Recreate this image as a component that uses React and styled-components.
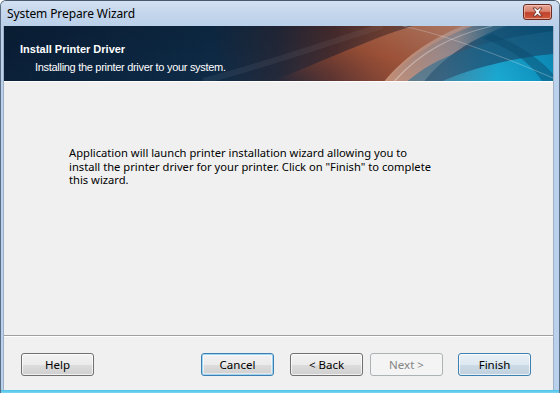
import React from "react";
import styled, { createGlobalStyle } from "styled-components";

const Global = createGlobalStyle`
  html, body { margin: 0; padding: 0; background: #ffffff; }
  body { font-family: "Noto Sans", "Open Sans", sans-serif; }
`;

const Window = styled.div`
  width: 560px;
  height: 393px;
  box-sizing: border-box;
  display: flex;
  flex-direction: column;
  background: #b9d1ea;
  border-top: 1px solid #4a5a6e;
  border-left: 1px solid #5b6d84;
  border-right: 1px solid #5b6d84;
  border-radius: 6px 6px 0 0;
  overflow: hidden;
  position: relative;
`;

const TitleBar = styled.div`
  height: 25px;
  flex: none;
  display: flex;
  align-items: center;
  justify-content: space-between;
  padding: 0 7px 0 6px;
  background: linear-gradient(#d3e1f1 0%, #c4d6ec 50%, #bad0e9 100%);
`;

const TitleText = styled.span`
  font-family: "Noto Sans", "Open Sans", sans-serif;
  font-size: 12px;
  color: #000;
  letter-spacing: -0.1px;
`;

const CloseButton = styled.div`
  width: 29px;
  height: 16px;
  box-sizing: border-box;
  border: 1px solid #6b2a22;
  border-radius: 3px;
  background: linear-gradient(#e5a596 0%, #d8826e 45%, #c0412b 55%, #cf5a3e 100%);
  display: flex;
  align-items: center;
  justify-content: center;
  margin-top: -3px;
  box-shadow: inset 0 0 0 1px rgba(255, 220, 210, 0.5);
`;

const Frame = styled.div`
  flex: 1;
  display: flex;
  flex-direction: column;
  margin: 0 5px 0 2px;
  border-left: 1px solid #9db0c6;
  border-right: 1px solid #9db0c6;
  background: #f0f0f0;
`;

const Banner = styled.div`
  height: 55px;
  flex: none;
  position: relative;
  border-bottom: 1px solid #ffffff;
  overflow: hidden;
  background: #0c2440;
`;

const BannerArt = styled.svg`
  position: absolute;
  inset: 0;
  width: 100%;
  height: 100%;
`;

const BannerText = styled.div`
  position: relative;
  padding: 17px 0 0 16px;
  color: #ffffff;
  display: flex;
  flex-direction: column;
`;

const BannerTitle = styled.span`
  font-family: "Liberation Sans", Arial, sans-serif;
  font-weight: bold;
  font-size: 11px;
  line-height: 13px;
`;

const BannerSub = styled.span`
  font-family: "Liberation Sans", Arial, sans-serif;
  font-size: 11px;
  line-height: 13px;
  margin-top: 5px;
  padding-left: 15px;
  letter-spacing: -0.3px;
`;

const Body = styled.div`
  flex: 1;
  padding: 64px 0 0 65px;
`;

const Message = styled.p`
  margin: 0;
  white-space: nowrap;
  font-family: "Noto Sans", "Open Sans", sans-serif;
  font-size: 11.2px;
  line-height: 13.5px;
  color: #000;
`;

const Separator = styled.div`
  height: 0;
  border-top: 1px solid #a0a0a0;
  border-bottom: 1px solid #ffffff;
  flex: none;
`;

const ButtonRow = styled.div`
  height: 52px;
  flex: none;
  display: flex;
  align-items: center;
  padding: 1px 22px 0 17px;
`;

const Spacer = styled.div`
  flex: 1;
`;

const Button = styled.div`
  width: 73px;
  height: 23px;
  box-sizing: border-box;
  margin-left: ${(p) => p.$gap || 0}px;
  border: 1px solid ${(p) => (p.$disabled ? "#adb2b5" : p.$focus || p.$default ? "#3c7fb1" : "#707070")};
  border-radius: 3px;
  display: flex;
  align-items: center;
  justify-content: center;
  font-family: "Noto Sans", "Open Sans", sans-serif;
  font-size: 11.5px;
  color: ${(p) => (p.$disabled ? "#838383" : "#000")};
  background: ${(p) =>
    p.$disabled
      ? "#f4f4f4"
      : p.$default
      ? "linear-gradient(#eaf1f6 0%, #dde8f0 50%, #ccdbe6 51%, #c0d1de 100%)"
      : "linear-gradient(#f2f2f2 0%, #ebebeb 50%, #dddddd 51%, #cfcfcf 100%)"};
  box-shadow: ${(p) =>
    p.$disabled
      ? "none"
      : p.$focus
      ? "inset 0 0 0 1px #9fd5f2, inset 0 0 0 2px rgba(255,255,255,0.5)"
      : "inset 0 0 0 1px rgba(255,255,255,0.7)"};
`;

const BottomEdge = styled.div`
  height: 3px;
  flex: none;
  background: linear-gradient(#46c3ea, #7fd6f0);
`;

function Art() {
  return (
    <BannerArt viewBox="0 0 551 55" preserveAspectRatio="none">
      <defs>
        <linearGradient id="base" x1="0" y1="0" x2="1" y2="0">
          <stop offset="0" stopColor="#0a2039" />
          <stop offset="0.38" stopColor="#0e2b47" />
          <stop offset="0.5" stopColor="#24293a" />
          <stop offset="0.6" stopColor="#4a2e30" />
          <stop offset="0.7" stopColor="#7a4536" />
          <stop offset="0.8" stopColor="#5a5a6a" />
          <stop offset="0.88" stopColor="#1b5f86" />
          <stop offset="1" stopColor="#0a5580" />
        </linearGradient>
        <linearGradient id="copper" x1="0" y1="1" x2="1" y2="0">
          <stop offset="0" stopColor="#8a4030" stopOpacity="0" />
          <stop offset="0.5" stopColor="#b25a3a" stopOpacity="0.75" />
          <stop offset="1" stopColor="#d99070" stopOpacity="0.85" />
        </linearGradient>
        <linearGradient id="peach" x1="0" y1="0" x2="1" y2="0">
          <stop offset="0" stopColor="#d9a58a" stopOpacity="0.75" />
          <stop offset="0.6" stopColor="#c8b2b0" stopOpacity="0.6" />
          <stop offset="1" stopColor="#8aa8bc" stopOpacity="0.15" />
        </linearGradient>
        <linearGradient id="cyan" x1="0" y1="0" x2="1" y2="0">
          <stop offset="0" stopColor="#4aa8c4" stopOpacity="0.5" />
          <stop offset="0.5" stopColor="#1aa9d3" />
          <stop offset="1" stopColor="#0d8fbd" />
        </linearGradient>
        <linearGradient id="shade" x1="0" y1="0" x2="0" y2="1">
          <stop offset="0" stopColor="#000000" stopOpacity="0.12" />
          <stop offset="1" stopColor="#000000" stopOpacity="0" />
        </linearGradient>
      </defs>
      <rect width="551" height="55" fill="url(#base)" />
      <path d="M270 55 C 320 35, 370 12, 410 0 L 470 0 C 430 15, 400 35, 385 55 Z" fill="url(#copper)" />
      <path d="M382 55 C 398 35, 425 14, 460 0 L 505 0 C 470 12, 440 32, 422 55 Z" fill="url(#peach)" />
      <path d="M405 55 C 435 30, 475 15, 551 5 L 551 55 Z" fill="#1d6f97" opacity="0.55" />
      <path d="M440 55 C 470 42, 510 32, 551 28 L 551 55 Z" fill="url(#cyan)" />
      <path d="M490 8 C 520 20, 540 35, 551 48 L 551 55 L 540 55 C 530 40, 515 25, 480 12 Z" fill="#0b4f73" opacity="0.5" />
      <path d="M400 0 C 440 8, 500 30, 551 52" stroke="#ffffff" strokeOpacity="0.3" strokeWidth="1" fill="none" />
      <path d="M392 55 C 418 26, 448 10, 490 0" stroke="#ffffff" strokeOpacity="0.35" strokeWidth="1.2" fill="none" />
      <path d="M200 55 C 260 40, 330 15, 380 0" stroke="#ffffff" strokeOpacity="0.06" strokeWidth="6" fill="none" />
      <rect width="551" height="55" fill="url(#shade)" />
    </BannerArt>
  );
}

function CloseGlyph() {
  return (
    <svg width="13" height="10" viewBox="0 0 13 10">
      <path
        d="M2 1 L5 1 L6.5 3 L8 1 L11 1 L8 5 L11 9 L8 9 L6.5 7 L5 9 L2 9 L5 5 Z"
        fill="#ffffff"
        stroke="#5a2a24"
        strokeWidth="0.8"
        strokeLinejoin="round"
      />
    </svg>
  );
}

export default function App() {
  return (
    <>
      <Global />
      <Window>
        <TitleBar>
          <TitleText>System Prepare Wizard</TitleText>
          <CloseButton>
            <CloseGlyph />
          </CloseButton>
        </TitleBar>
        <Frame>
          <Banner>
            <Art />
            <BannerText>
              <BannerTitle>Install Printer Driver</BannerTitle>
              <BannerSub>Installing the printer driver to your system.</BannerSub>
            </BannerText>
          </Banner>
          <Body>
            <Message>
              Application will launch printer installation wizard allowing you to
              <br />
              install the printer driver for your printer. Click on "Finish" to complete
              <br />
              this wizard.
            </Message>
          </Body>
          <Separator />
          <ButtonRow>
            <Button>Help</Button>
            <Spacer />
            <Button $focus>Cancel</Button>
            <Button $gap={16}>&lt; Back</Button>
            <Button $gap={7} $disabled>
              Next &gt;
            </Button>
            <Button $gap={15} $default>
              Finish
            </Button>
          </ButtonRow>
        </Frame>
        <BottomEdge />
      </Window>
    </>
  );
}
